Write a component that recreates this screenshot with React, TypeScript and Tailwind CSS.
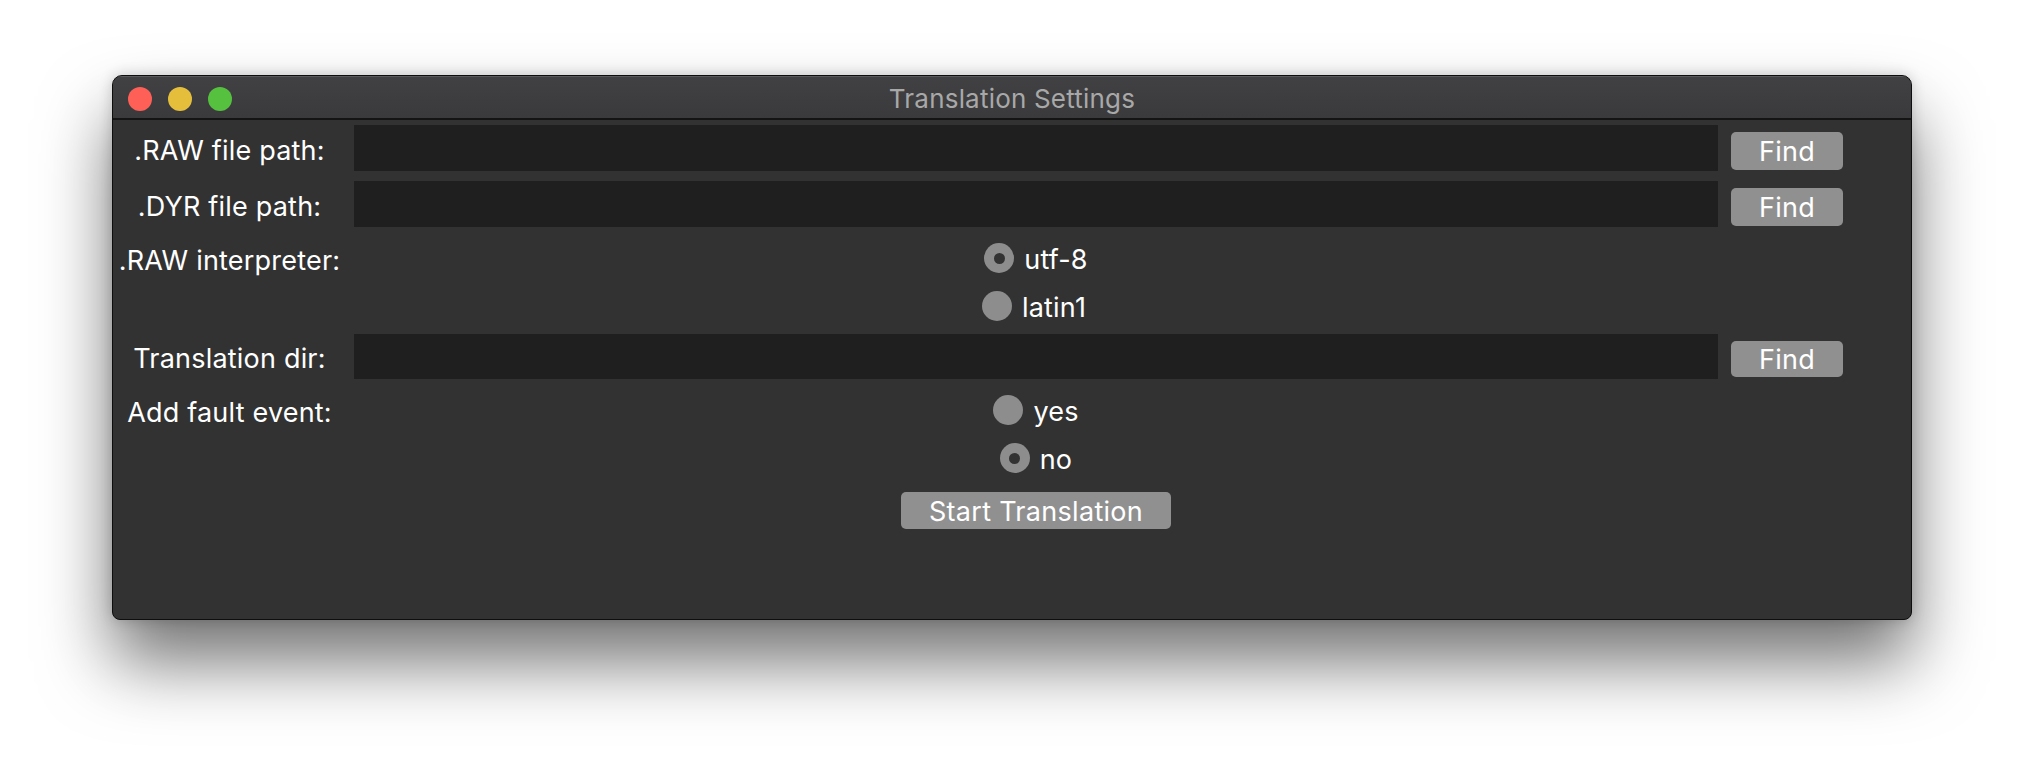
const FONT = "font-['Inter','Liberation_Sans',sans-serif]";

function Radio({ checked, label }: { checked?: boolean; label: string }) {
  return (
    <div className="flex items-center gap-[10px]">
      <div className="w-[30px] h-[30px] rounded-full bg-[#8d8d8d] flex items-center justify-center">
        {checked && <div className="w-[11px] h-[11px] rounded-full bg-[#333333]" />}
      </div>
      <span className="text-[27px] tracking-[0.2px] text-white leading-none pt-[2px]">{label}</span>
    </div>
  );
}

function Label({ text }: { text: string }) {
  return (
    <div className="w-[233px] shrink-0 text-center text-[27px] tracking-[0.2px] text-white leading-none pt-[4px]">
      {text}
    </div>
  );
}

function FindButton({ h }: { h: string }) {
  return (
    <button className={`ml-[13px] w-[112px] ${h} mt-[5px] rounded-[5px] bg-[#909090] text-white text-[27px] tracking-[0.2px] leading-none pt-[2px]`}>
      Find
    </button>
  );
}

function PathRow({ label }: { label: string }) {
  return (
    <div className="flex items-center h-[56px]">
      <Label text={label} />
      <div className="ml-[8px] w-[1364px] h-[46px] bg-[#1f1f1f]" />
      <FindButton h="h-[38px]" />
    </div>
  );
}

export default function App() {
  return (
    <div className={`w-[2024px] h-[768px] bg-white pt-[75px] pl-[112px] ${FONT}`}>
      <div className="w-[1800px] h-[545px] rounded-t-[10px] rounded-b-[8px] border border-[#0e0e0e] bg-[#323232] overflow-hidden shadow-[0_42px_70px_rgba(0,0,0,0.55),0_0_14px_rgba(0,0,0,0.18)] flex flex-col">

        {/* ── Title bar ─────────────────────────────── */}
        <div className="relative h-[44px] shrink-0 bg-gradient-to-b from-[#414144] to-[#3a3a3c] border-b-2 border-[#141414] border-t border-t-[#5a5a5c] flex items-center justify-center">
          <div className="absolute left-[15px] top-[10px] flex gap-[16px]">
            <div className="w-[24px] h-[24px] rounded-full bg-[#fe5f57]" />
            <div className="w-[24px] h-[24px] rounded-full bg-[#e5bf3c]" />
            <div className="w-[24px] h-[24px] rounded-full bg-[#55c13f]" />
          </div>
          <span className="text-[26px] tracking-[0.2px] text-[#a8a8a8] leading-none pt-[3px]">Translation Settings</span>
        </div>

        {/* ── Form ──────────────────────────────────── */}
        <div className="flex flex-col">
          <PathRow label=".RAW file path:" />
          <PathRow label=".DYR file path:" />

          <div className="flex items-center h-[52px]">
            <Label text=".RAW interpreter:" />
            <div className="ml-[8px] w-[1364px] flex justify-center">
              <Radio checked label="utf-8" />
            </div>
          </div>
          <div className="flex items-center h-[44px]">
            <div className="w-[233px] shrink-0" />
            <div className="ml-[8px] w-[1364px] flex justify-center pr-[4px]">
              <Radio label="latin1" />
            </div>
          </div>

          <div className="flex items-center h-[56px]">
            <Label text="Translation dir:" />
            <div className="ml-[8px] w-[1364px] h-[45px] bg-[#1f1f1f]" />
            <FindButton h="h-[36px]" />
          </div>

          <div className="flex items-center h-[52px]">
            <Label text="Add fault event:" />
            <div className="ml-[8px] w-[1364px] flex justify-center">
              <Radio label="yes" />
            </div>
          </div>
          <div className="flex items-center h-[44px]">
            <div className="w-[233px] shrink-0" />
            <div className="ml-[8px] w-[1364px] flex justify-center">
              <Radio checked label="no" />
            </div>
          </div>

          <div className="flex mt-[12px]">
            <div className="w-[233px] shrink-0" />
            <div className="ml-[8px] w-[1364px] flex justify-center">
              <button className="w-[270px] h-[37px] rounded-[5px] bg-[#909090] text-white text-[27px] tracking-[0.3px] leading-none pt-[2px]">
                Start Translation
              </button>
            </div>
          </div>
        </div>
      </div>
    </div>
  );
}
